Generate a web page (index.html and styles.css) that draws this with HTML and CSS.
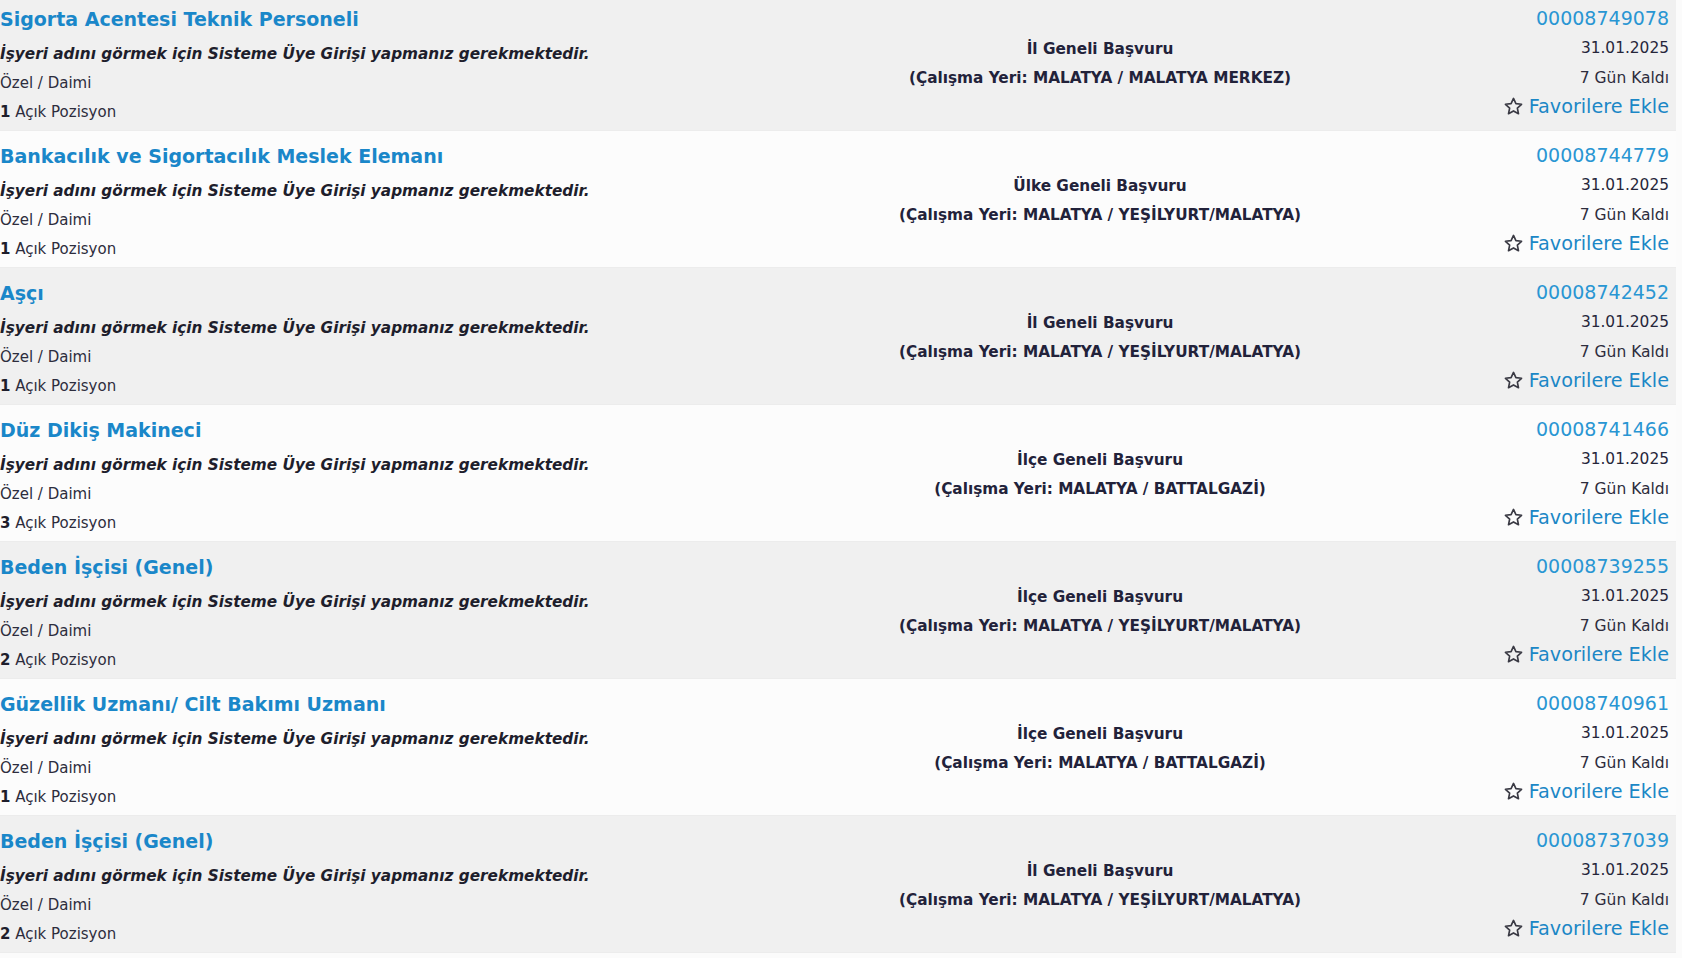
FILE: index.html
```html
<!DOCTYPE html>
<html lang="tr">
<head>
<meta charset="utf-8">
<title>İş İlanları</title>
<link rel="stylesheet" href="styles.css">
</head>
<body>
<div class="list">
  <div class="row odd">
    <div class="col-left">
      <a class="title" href="#">Sigorta Acentesi Teknik Personeli</a>
      <div class="employer">İşyeri adını görmek için Sisteme Üye Girişi yapmanız gerekmektedir.</div>
      <div class="line">Özel / Daimi</div>
      <div class="line"><b>1</b> Açık Pozisyon</div>
    </div>
    <div class="col-mid">
      <div>İl Geneli Başvuru</div>
      <div>(Çalışma Yeri: MALATYA / MALATYA MERKEZ)</div>
    </div>
    <div class="col-right">
      <a class="ilan-no" href="#">00008749078</a>
      <div class="date">31.01.2025</div>
      <div class="remain">7 Gün Kaldı</div>
      <a class="fav" href="#"><svg class="star" viewBox="0 0 24 24"><path d="M12 2.8l2.75 5.9 6.45.75-4.8 4.4 1.3 6.4L12 17.05 6.3 20.25l1.3-6.4-4.8-4.4 6.45-.75z"/></svg>Favorilere Ekle</a>
    </div>
  </div>

  <div class="row">
    <div class="col-left">
      <a class="title" href="#">Bankacılık ve Sigortacılık Meslek Elemanı</a>
      <div class="employer">İşyeri adını görmek için Sisteme Üye Girişi yapmanız gerekmektedir.</div>
      <div class="line">Özel / Daimi</div>
      <div class="line"><b>1</b> Açık Pozisyon</div>
    </div>
    <div class="col-mid">
      <div>Ülke Geneli Başvuru</div>
      <div>(Çalışma Yeri: MALATYA / YEŞİLYURT/MALATYA)</div>
    </div>
    <div class="col-right">
      <a class="ilan-no" href="#">00008744779</a>
      <div class="date">31.01.2025</div>
      <div class="remain">7 Gün Kaldı</div>
      <a class="fav" href="#"><svg class="star" viewBox="0 0 24 24"><path d="M12 2.8l2.75 5.9 6.45.75-4.8 4.4 1.3 6.4L12 17.05 6.3 20.250l1.3-6.4-4.8-4.4 6.45-.75z"/></svg>Favorilere Ekle</a>
    </div>
  </div>

  <div class="row odd">
    <div class="col-left">
      <a class="title" href="#">Aşçı</a>
      <div class="employer">İşyeri adını görmek için Sisteme Üye Girişi yapmanız gerekmektedir.</div>
      <div class="line">Özel / Daimi</div>
      <div class="line"><b>1</b> Açık Pozisyon</div>
    </div>
    <div class="col-mid">
      <div>İl Geneli Başvuru</div>
      <div>(Çalışma Yeri: MALATYA / YEŞİLYURT/MALATYA)</div>
    </div>
    <div class="col-right">
      <a class="ilan-no" href="#">00008742452</a>
      <div class="date">31.01.2025</div>
      <div class="remain">7 Gün Kaldı</div>
      <a class="fav" href="#"><svg class="star" viewBox="0 0 24 24"><path d="M12 2.8l2.75 5.9 6.45.75-4.8 4.4 1.3 6.4L12 17.05 6.3 20.25l1.3-6.4-4.8-4.4 6.45-.75z"/></svg>Favorilere Ekle</a>
    </div>
  </div>

  <div class="row">
    <div class="col-left">
      <a class="title" href="#">Düz Dikiş Makineci</a>
      <div class="employer">İşyeri adını görmek için Sisteme Üye Girişi yapmanız gerekmektedir.</div>
      <div class="line">Özel / Daimi</div>
      <div class="line"><b>3</b> Açık Pozisyon</div>
    </div>
    <div class="col-mid">
      <div>İlçe Geneli Başvuru</div>
      <div>(Çalışma Yeri: MALATYA / BATTALGAZİ)</div>
    </div>
    <div class="col-right">
      <a class="ilan-no" href="#">00008741466</a>
      <div class="date">31.01.2025</div>
      <div class="remain">7 Gün Kaldı</div>
      <a class="fav" href="#"><svg class="star" viewBox="0 0 24 24"><path d="M12 2.8l2.75 5.9 6.45.75-4.8 4.4 1.3 6.4L12 17.05 6.3 20.25l1.3-6.4-4.8-4.4 6.45-.75z"/></svg>Favorilere Ekle</a>
    </div>
  </div>

  <div class="row odd">
    <div class="col-left">
      <a class="title" href="#">Beden İşçisi (Genel)</a>
      <div class="employer">İşyeri adını görmek için Sisteme Üye Girişi yapmanız gerekmektedir.</div>
      <div class="line">Özel / Daimi</div>
      <div class="line"><b>2</b> Açık Pozisyon</div>
    </div>
    <div class="col-mid">
      <div>İlçe Geneli Başvuru</div>
      <div>(Çalışma Yeri: MALATYA / YEŞİLYURT/MALATYA)</div>
    </div>
    <div class="col-right">
      <a class="ilan-no" href="#">00008739255</a>
      <div class="date">31.01.2025</div>
      <div class="remain">7 Gün Kaldı</div>
      <a class="fav" href="#"><svg class="star" viewBox="0 0 24 24"><path d="M12 2.8l2.75 5.9 6.45.75-4.8 4.4 1.3 6.4L12 17.05 6.3 20.25l1.3-6.4-4.8-4.4 6.45-.75z"/></svg>Favorilere Ekle</a>
    </div>
  </div>

  <div class="row">
    <div class="col-left">
      <a class="title" href="#">Güzellik Uzmanı/ Cilt Bakımı Uzmanı</a>
      <div class="employer">İşyeri adını görmek için Sisteme Üye Girişi yapmanız gerekmektedir.</div>
      <div class="line">Özel / Daimi</div>
      <div class="line"><b>1</b> Açık Pozisyon</div>
    </div>
    <div class="col-mid">
      <div>İlçe Geneli Başvuru</div>
      <div>(Çalışma Yeri: MALATYA / BATTALGAZİ)</div>
    </div>
    <div class="col-right">
      <a class="ilan-no" href="#">00008740961</a>
      <div class="date">31.01.2025</div>
      <div class="remain">7 Gün Kaldı</div>
      <a class="fav" href="#"><svg class="star" viewBox="0 0 24 24"><path d="M12 2.8l2.75 5.9 6.45.75-4.8 4.4 1.3 6.4L12 17.05 6.3 20.25l1.3-6.4-4.8-4.4 6.45-.75z"/></svg>Favorilere Ekle</a>
    </div>
  </div>

  <div class="row odd">
    <div class="col-left">
      <a class="title" href="#">Beden İşçisi (Genel)</a>
      <div class="employer">İşyeri adını görmek için Sisteme Üye Girişi yapmanız gerekmektedir.</div>
      <div class="line">Özel / Daimi</div>
      <div class="line"><b>2</b> Açık Pozisyon</div>
    </div>
    <div class="col-mid">
      <div>İl Geneli Başvuru</div>
      <div>(Çalışma Yeri: MALATYA / YEŞİLYURT/MALATYA)</div>
    </div>
    <div class="col-right">
      <a class="ilan-no" href="#">00008737039</a>
      <div class="date">31.01.2025</div>
      <div class="remain">7 Gün Kaldı</div>
      <a class="fav" href="#"><svg class="star" viewBox="0 0 24 24"><path d="M12 2.8l2.75 5.9 6.45.75-4.8 4.4 1.3 6.4L12 17.05 6.3 20.25l1.3-6.4-4.8-4.4 6.45-.75z"/></svg>Favorilere Ekle</a>
    </div>
  </div>
</div>
</body>
</html>
```

FILE: styles.css
```css
html, body {
  margin: 0;
  padding: 0;
}

body {
  background: #fbfbfb;
  font-family: "DejaVu Sans", Verdana, sans-serif;
  font-size: 15px;
  color: #2b2b3a;
  width: 1682px;
  height: 958px;
  overflow: hidden;
}

.list {
  margin-top: -6px;
  width: 1676px;
}

.row {
  display: grid;
  grid-template-columns: 800px 600px 1fr;
  height: 137px;
  box-sizing: border-box;
  background: #fcfcfc;
  border-bottom: 1px solid #ececec;
}

.row.odd {
  background: #f0f0f0;
}

.col-left {
  padding-top: 8px;
  display: flex;
  flex-direction: column;
  align-items: flex-start;
}

.title {
  font-size: 19px;
  font-weight: bold;
  color: #1a87c9;
  text-decoration: none;
  line-height: 34px;
  margin-bottom: 4px;
  white-space: nowrap;
}

.employer {
  font-size: 15.3px;
  font-weight: bold;
  font-style: italic;
  color: #1e1e2c;
  line-height: 29px;
  white-space: nowrap;
}

.line {
  line-height: 29.3px;
  color: #2d2d3d;
  white-space: nowrap;
}

.line b {
  color: #1e1e2c;
}

.col-mid {
  display: flex;
  flex-direction: column;
  justify-content: center;
  align-items: center;
  font-size: 15.3px;
  font-weight: bold;
  color: #22223a;
  line-height: 29px;
  padding-top: 4px;
  white-space: nowrap;
}

.col-right {
  padding-top: 10px;
  padding-right: 7px;
  display: flex;
  flex-direction: column;
  align-items: flex-end;
}

.ilan-no {
  font-size: 19px;
  color: #2996d3;
  text-decoration: none;
  line-height: 29.3px;
}

.date {
  font-size: 15.4px;
  color: #26263a;
  line-height: 29.3px;
  margin-top: 1px;
  margin-bottom: -1px;
}

.remain {
  font-size: 15.5px;
  color: #2d2d3d;
  line-height: 29.3px;
  margin-top: 1px;
  margin-bottom: -1px;
}

.fav {
  display: flex;
  align-items: center;
  gap: 5px;
  font-size: 19.2px;
  color: #1b87c6;
  text-decoration: none;
  line-height: 29.3px;
}

.star {
  width: 21px;
  height: 21px;
  fill: none;
  stroke: #3a3a44;
  stroke-width: 1.9;
  stroke-linejoin: round;
}
```
